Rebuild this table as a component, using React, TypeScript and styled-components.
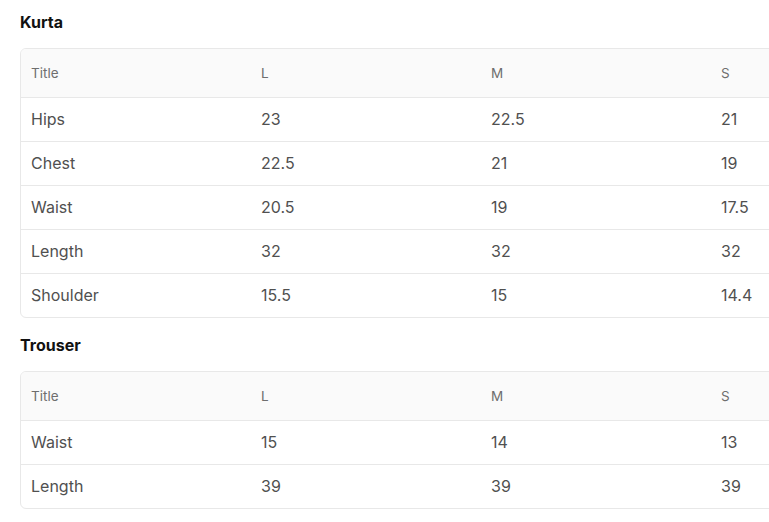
import React from "react";
import styled, { createGlobalStyle } from "styled-components";

const GlobalStyle = createGlobalStyle`
  html, body {
    margin: 0;
    padding: 0;
    background: #ffffff;
    font-family: Inter, "Noto Sans", "Liberation Sans", sans-serif;
    overflow: hidden;
  }
`;

const Page = styled.div`
  padding: 12px 0 0 20px;
  overflow: hidden;
`;

const Section = styled.section`
  margin-bottom: 17px;
`;

const Heading = styled.h3`
  margin: 0 0 16px 0;
  font-size: 16px;
  line-height: 20px;
  font-weight: 700;
  color: #111111;
`;

const TableBox = styled.div`
  width: 920px;
  border: 1px solid #e8e8e8;
  border-radius: 6px;
  overflow: hidden;
`;

const Table = styled.table`
  width: 100%;
  border-collapse: collapse;
  table-layout: fixed;
`;

const HeadCell = styled.th`
  height: 48px;
  padding: 0 10px;
  text-align: left;
  font-size: 13.5px;
  font-weight: 400;
  color: #6e6e6e;
  background: #fafafa;
  border-bottom: 1px solid #e8e8e8;
`;

const Row = styled.tr`
  & + & td {
    border-top: 1px solid #e8e8e8;
  }
`;

const Cell = styled.td`
  height: 42px;
  padding: 0 10px 1px;
  font-size: 16px;
  line-height: 20px;
  color: #505050;
`;

type SizeTable = {
  title: string;
  rows: [string, string, string, string][];
};

const tables: SizeTable[] = [
  {
    title: "Kurta",
    rows: [
      ["Hips", "23", "22.5", "21"],
      ["Chest", "22.5", "21", "19"],
      ["Waist", "20.5", "19", "17.5"],
      ["Length", "32", "32", "32"],
      ["Shoulder", "15.5", "15", "14.4"],
    ],
  },
  {
    title: "Trouser",
    rows: [
      ["Waist", "15", "14", "13"],
      ["Length", "39", "39", "39"],
    ],
  },
];

const columns = ["Title", "L", "M", "S"];

const App = () => {
  return (
    <>
      <GlobalStyle />
      <Page>
        {tables.map((t) => (
          <Section key={t.title}>
            <Heading>{t.title}</Heading>
            <TableBox>
              <Table>
                <thead>
                  <tr>
                    {columns.map((c) => (
                      <HeadCell key={c}>{c}</HeadCell>
                    ))}
                  </tr>
                </thead>
                <tbody>
                  {t.rows.map((r) => (
                    <Row key={r[0]}>
                      {r.map((v, i) => (
                        <Cell key={i}>{v}</Cell>
                      ))}
                    </Row>
                  ))}
                </tbody>
              </Table>
            </TableBox>
          </Section>
        ))}
      </Page>
    </>
  );
};

export default App;
